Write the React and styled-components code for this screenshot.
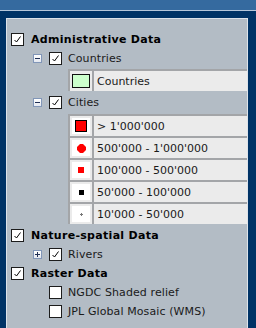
import styled, { createGlobalStyle } from 'styled-components';

const GlobalStyle = createGlobalStyle`
  html, body {
    margin: 0;
    padding: 0;
    background: #003366;
  }
  body {
    font-family: "DejaVu Sans", Verdana, sans-serif;
    font-size: 11px;
    color: #111;
  }
`;

const Page = styled.div`
  width: 256px;
  height: 328px;
  overflow: hidden;
  background: #003366;
  display: flex;
  flex-direction: column;
`;

const TopBar = styled.div`
  height: 10px;
  background: #356a9f;
  border-bottom: 1px solid #b6c7da;
`;

const Content = styled.div`
  flex: 1;
  padding: 7px 8px 0 6px;
  display: flex;
`;

const Panel = styled.div`
  flex: 1;
  background: #b3bcc5;
  border: 1px solid #dde3ea;
  border-bottom: none;
  padding-top: 11px;
  display: flex;
  flex-direction: column;
`;

const Row = styled.div`
  height: 19px;
  flex-shrink: 0;
  display: flex;
  align-items: center;
  padding-left: ${p => (p.$level === 1 ? 4 : 26)}px;
`;

const Label = styled.span`
  margin-left: ${p => (p.$bold ? 7 : 6)}px;
  font-weight: ${p => (p.$bold ? 700 : 400)};
  letter-spacing: ${p => (p.$bold ? 0.3 : 0.1)}px;
  color: ${p => (p.$bold ? '#000' : '#1a1a1a')};
  white-space: nowrap;
`;

const Box = styled.span`
  width: 11px;
  height: 11px;
  border: 1px solid #1c1c1c;
  background: #fff;
  display: inline-flex;
  align-items: center;
  justify-content: center;
  flex-shrink: 0;
`;

const Toggle = styled.span`
  width: 7px;
  height: 7px;
  border: 1px solid #8196b8;
  background: linear-gradient(#ffffff, #e4e8f0);
  display: inline-flex;
  align-items: center;
  justify-content: center;
  margin-right: 7px;
  flex-shrink: 0;
`;

const Spacer = styled.span`
  width: 16px;
  flex-shrink: 0;
`;

const Legend = styled.div`
  margin: ${p => p.$mt}px 0 ${p => p.$mb}px 61px;
  background: #a3a5a8;
  padding: 2px 0 0 2px;
  display: grid;
  grid-template-columns: 22px 1fr;
  grid-auto-rows: 20px;
  gap: 2px;
  flex-shrink: 0;
`;

const IconCell = styled.div`
  background: #ebebeb;
  display: flex;
  align-items: center;
  justify-content: center;
`;

const IconImage = styled.div`
  width: 18px;
  height: 16px;
  background: #fff;
  display: flex;
  align-items: center;
  justify-content: center;
`;

const Swatch = styled.div`
  width: 16px;
  height: 12px;
  border: 1px solid #111;
  background: #ccffcc;
`;

const TextCell = styled.div`
  background: #ebebeb;
  display: flex;
  align-items: center;
  padding-left: 3px;
  color: #1a1a1a;
  white-space: nowrap;
`;

const Check = ({ checked = true }) => (
  <Box>
    {checked && (
      <svg width="9" height="9" viewBox="0 0 9 9">
        <path d="M1.5 5 L3.5 7 L7.5 1.5" fill="none" stroke="#000" strokeWidth="1" />
      </svg>
    )}
  </Box>
);

const Expander = ({ open }) => (
  <Toggle>
    <svg width="7" height="7" viewBox="0 0 7 7">
      <rect x="1" y="3" width="5" height="1" fill="#1f2f55" />
      {!open && <rect x="3" y="1" width="1" height="5" fill="#1f2f55" />}
    </svg>
  </Toggle>
);

const symbols = {
  big: <svg width="12" height="12"><rect x="0.5" y="0.5" width="11" height="11" fill="#ff0000" stroke="#000" /></svg>,
  dot: (
    <svg width="9" height="9" viewBox="0 0 9 9">
      <polygon points="3,0 6,0 9,3 9,6 6,9 3,9 0,6 0,3" fill="#ff0000" />
    </svg>
  ),
  mid: <svg width="6" height="6"><rect width="6" height="6" fill="#ff0000" /></svg>,
  small: <svg width="5" height="5"><rect width="5" height="5" fill="#000" /></svg>,
  tiny: (
    <svg width="3" height="3">
      <rect x="1" y="0" width="1" height="3" fill="#777" />
      <rect x="0" y="1" width="3" height="1" fill="#777" />
    </svg>
  ),
};

const cityClasses = [
  { sym: 'big', label: "> 1'000'000" },
  { sym: 'dot', label: "500'000 - 1'000'000" },
  { sym: 'mid', label: "100'000 - 500'000" },
  { sym: 'small', label: "50'000 - 100'000" },
  { sym: 'tiny', label: "10'000 - 50'000" },
];

export default function App() {
  return (
    <Page>
      <GlobalStyle />
      <TopBar />
      <Content>
        <Panel>
          <Row $level={1}>
            <Check />
            <Label $bold>Administrative Data</Label>
          </Row>
          <Row $level={2}>
            <Expander open />
            <Check />
            <Label>Countries</Label>
          </Row>
          <Legend $mt={1} $mb={2}>
            <IconCell>
              <Swatch />
            </IconCell>
            <TextCell>Countries</TextCell>
          </Legend>
          <Row $level={2}>
            <Expander open />
            <Check />
            <Label>Cities</Label>
          </Row>
          <Legend $mt={2} $mb={2}>
            {cityClasses.map(c => [
              <IconCell key={c.sym + 'i'}>
                <IconImage>{symbols[c.sym]}</IconImage>
              </IconCell>,
              <TextCell key={c.sym + 't'}>{c.label}</TextCell>,
            ])}
          </Legend>
          <Row $level={1}>
            <Check />
            <Label $bold>Nature-spatial Data</Label>
          </Row>
          <Row $level={2}>
            <Expander />
            <Check />
            <Label>Rivers</Label>
          </Row>
          <Row $level={1}>
            <Check />
            <Label $bold>Raster Data</Label>
          </Row>
          <Row $level={2}>
            <Spacer />
            <Check checked={false} />
            <Label>NGDC Shaded relief</Label>
          </Row>
          <Row $level={2}>
            <Spacer />
            <Check checked={false} />
            <Label>JPL Global Mosaic (WMS)</Label>
          </Row>
        </Panel>
      </Content>
    </Page>
  );
}
